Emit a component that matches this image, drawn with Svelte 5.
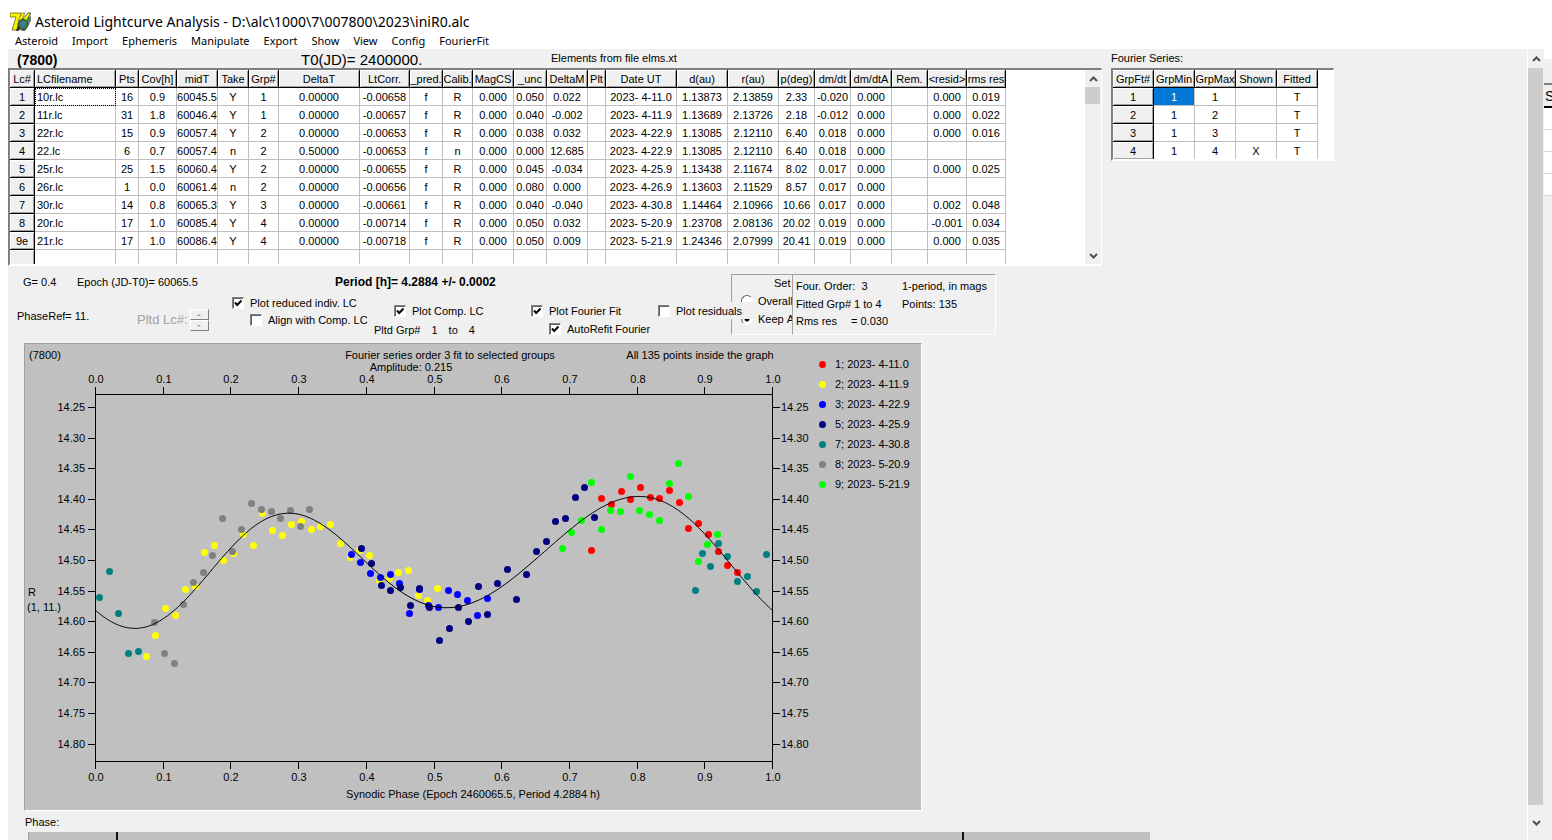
<script>
  const menus = ['Asteroid', 'Import', 'Ephemeris', 'Manipulate', 'Export', 'Show', 'View', 'Config', 'FourierFit'];

  const columns = [
    ['Lc#', 25], ['LCfilename', 81], ['Pts', 23], ['Cov[h]', 38], ['midT', 41], ['Take', 31], ['Grp#', 30],
    ['DeltaT', 81], ['LtCorr.', 50], ['_pred.', 33], ['Calib.', 30], ['MagCS', 41], ['_unc', 33], ['DeltaM', 41],
    ['Plt', 18], ['Date UT', 71], ['d(au)', 51], ['r(au)', 51], ['p(deg)', 36], ['dm/dt', 36], ['dm/dtA', 41],
    ['Rem.', 36], ['<resid>', 39], ['rms res', 39]
  ];

  const rows = [
    '1|10r.lc|16|0.9|60045.5|Y|1|0.00000|-0.00658|f|R|0.000|0.050|0.022||2023- 4-11.0|1.13873|2.13859|2.33|-0.020|0.000||0.000|0.019',
    '2|11r.lc|31|1.8|60046.4|Y|1|0.00000|-0.00657|f|R|0.000|0.040|-0.002||2023- 4-11.9|1.13689|2.13726|2.18|-0.012|0.000||0.000|0.022',
    '3|22r.lc|15|0.9|60057.4|Y|2|0.00000|-0.00653|f|R|0.000|0.038|0.032||2023- 4-22.9|1.13085|2.12110|6.40|0.018|0.000||0.000|0.016',
    '4|22.lc|6|0.7|60057.4|n|2|0.50000|-0.00653|f|n|0.000|0.000|12.685||2023- 4-22.9|1.13085|2.12110|6.40|0.018|0.000|||',
    '5|25r.lc|25|1.5|60060.4|Y|2|0.00000|-0.00655|f|R|0.000|0.045|-0.034||2023- 4-25.9|1.13438|2.11674|8.02|0.017|0.000||0.000|0.025',
    '6|26r.lc|1|0.0|60061.4|n|2|0.00000|-0.00656|f|R|0.000|0.080|0.000||2023- 4-26.9|1.13603|2.11529|8.57|0.017|0.000|||',
    '7|30r.lc|14|0.8|60065.3|Y|3|0.00000|-0.00661|f|R|0.000|0.040|-0.040||2023- 4-30.8|1.14464|2.10966|10.66|0.017|0.000||0.002|0.048',
    '8|20r.lc|17|1.0|60085.4|Y|4|0.00000|-0.00714|f|R|0.000|0.050|0.032||2023- 5-20.9|1.23708|2.08136|20.02|0.019|0.000||-0.001|0.034',
    '9e|21r.lc|17|1.0|60086.4|Y|4|0.00000|-0.00718|f|R|0.000|0.050|0.009||2023- 5-21.9|1.24346|2.07999|20.41|0.019|0.000||0.000|0.035',
    '|||||||||||||||||||||||'
  ].map((r) => r.split('|'));

  const fourierCols = ['GrpFt#', 'GrpMin', 'GrpMax', 'Shown', 'Fitted'];
  const fourierRows = [
    ['1', '1', '1', '', 'T'],
    ['2', '1', '2', '', 'T'],
    ['3', '1', '3', '', 'T'],
    ['4', '1', '4', 'X', 'T']
  ];

  // Observed points of each lightcurve, in chart units.
  const series = [
    { label: '1; 2023- 4-11.0', color: '#ff0000', pts: [[591,550],[601,498],[611,504],[621,491],[630,499],[640,487],[650,497],[659,498],[669,490],[679,502],[688,528],[698,523],[708,534],[718,551],[727,565],[737,572]] },
    { label: '2; 2023- 4-11.9', color: '#ffff00', pts: [[146,656],[155,635],[165,608],[175,615],[185,589],[195,586],[204,552],[214,545],[223,560],[233,553],[243,534],[253,545],[262,513],[272,530],[282,535],[291,524],[301,521],[311,529],[320,526],[330,524],[340,543],[350,557],[359,550],[369,555],[379,580],[389,578],[398,572],[408,570],[418,595],[427,600],[437,588]] },
    { label: '3; 2023- 4-22.9', color: '#0000ff', pts: [[351,554],[360,562],[370,573],[380,577],[390,574],[399,583],[409,613],[419,589],[428,605],[438,607],[448,590],[457,594],[467,600],[477,615],[487,598]] },
    { label: '5; 2023- 4-25.9', color: '#000080', pts: [[361,548],[371,563],[381,585],[390,590],[400,587],[410,605],[419,588],[429,607],[439,640],[449,628],[458,607],[468,621],[478,586],[487,614],[497,583],[507,569],[516,599],[526,574],[536,551],[546,541],[555,521],[565,518],[575,497],[584,487],[594,517]] },
    { label: '7; 2023- 4-30.8', color: '#008080', pts: [[99,597],[109,571],[118,613],[128,653],[138,651],[695,590],[702,553],[710,566],[718,543],[727,556],[737,581],[747,576],[756,591],[766,554]] },
    { label: '8; 2023- 5-20.9', color: '#808080', pts: [[154,622],[164,653],[174,663],[183,604],[193,582],[203,572],[212,555],[222,518],[232,551],[241,529],[251,503],[261,509],[271,511],[280,518],[290,510],[300,526],[309,509]] },
    { label: '9; 2023- 5-21.9', color: '#00ff00', pts: [[562,548],[571,532],[581,520],[591,482],[601,529],[610,510],[620,511],[630,476],[639,510],[649,514],[659,520],[669,483],[678,463],[688,496],[698,561],[707,544],[717,534]] }
  ];

  // Third-order Fourier curve through these nodes over one period.
  const nodes = [[95,610],[107,620],[118,625],[134,627.5],[152,624.5],[167,616.5],[183,603],[200,582],[223,555],[246,531],[262,519.5],[276,514],[290,513],[306,516],[323,525],[340,538],[357,553],[380,576],[397,589],[413,598.5],[430,605],[447,607.5],[464,605],[481,598.5],[498,589],[517,576],[538,556],[560,536],[580,520],[600,507],[620,499],[640,495.5],[660,500],[680,511],[700,528],[718,549],[737,572],[756,594],[772,610]];
  const X0 = 95.5;
  const WIDTH = 677;
  const STEPS = 338;
  const samples = Array.from({ length: STEPS }, (_, k) => {
    const x = 95 + (k / STEPS) * WIDTH;
    const i = nodes.findIndex((n) => n[0] > x);
    const [a, b] = [nodes[i - 1], nodes[i]];
    return a[1] + ((b[1] - a[1]) * (x - a[0])) / (b[0] - a[0]);
  });
  const mean = samples.reduce((s, v) => s + v, 0) / STEPS;
  const harmonics = [1, 2, 3].map((h) => {
    const w = (2 * Math.PI * h) / STEPS;
    return {
      w,
      c: (samples.reduce((s, v, k) => s + v * Math.cos(w * k), 0) * 2) / STEPS,
      s: (samples.reduce((s, v, k) => s + v * Math.sin(w * k), 0) * 2) / STEPS
    };
  });
  const curve = 'M' + Array.from({ length: STEPS + 1 }, (_, k) => {
    const y = harmonics.reduce((t, h) => t + h.c * Math.cos(h.w * k) + h.s * Math.sin(h.w * k), mean);
    return `${(X0 + (k / STEPS) * WIDTH).toFixed(1)} ${(y + 0.5).toFixed(1)}`;
  }).join('L');

  const xTicks = Array.from({ length: 11 }, (_, i) => ({ x: Math.round(95 + i * 67.7), t: (i / 10).toFixed(1) }));
  const yTicks = Array.from({ length: 12 }, (_, i) => ({ y: Math.round(407 + i * 30.6), t: (14.25 + i * 0.05).toFixed(2) }));
</script>

{#snippet chevron(up)}
  <svg class="chev" viewBox="0 0 9 6" aria-hidden="true">
    <path d={up ? 'M1 5 4.5 1.5 8 5' : 'M1 1 4.5 4.5 8 1'} fill="none" stroke="#505050" stroke-width="2" />
  </svg>
{/snippet}

{#snippet check(label, on)}
  <label class="check"><input type="checkbox" checked={on} /><span>{label}</span></label>
{/snippet}

<div class="window">
  <header class="title">
    <svg class="logo" viewBox="0 0 21 20" aria-hidden="true">
      <path d="M11 19 21 3V9L15 19Z" fill="#777" />
      <path d="M0 1H11V4L7 18H2L6 5H0Z" fill="#f8f000" stroke="#6b6a00" stroke-width=".8" />
      <path d="M8 9 12 1H15L12 8Z" fill="#f8f000" stroke="#555" stroke-width=".6" />
      <path d="M12 8 18 1H21L15 11Z" fill="#f8f000" stroke="#333" stroke-width=".8" />
      <circle cx="13" cy="12.500" r="5" fill="#2f7f4a" stroke="#1f3d33" />
      <path d="M10 11l3-2 3 2-1 3-3 1z" fill="#4b78a8" />
      <path d="M6 19l2-6 3 4-3 2z" fill="#333" />
      <path d="M16 10 20 5" stroke="#2d8a3a" stroke-width="2" />
    </svg>
    <h1>Asteroid Lightcurve Analysis - D:\alc\1000\7\007800\2023\iniR0.alc</h1>
  </header>
  <nav>
    {#each menus as m}<button type="button">{m}</button>{/each}
  </nav>

  <div class="body">
    <main>
      <div class="top">
        <section class="curves">
          <div class="caption">
            <strong>(7800)</strong>
            <span class="t0">T0(JD)= 2400000.</span>
            <span class="elements">Elements from file elms.xt</span>
          </div>
          <div class="grid-box">
            <div class="cells">
              <table>
                <colgroup>{#each columns as c}<col style="width:{c[1]}px" />{/each}</colgroup>
                <thead><tr>{#each columns as c, i}<th class:left={i === 1}>{c[0]}</th>{/each}</tr></thead>
                <tbody>
                  {#each rows as r, ri}
                    <tr>
                      {#each r as v, i}
                        {#if i === 0}<th scope="row">{v}</th>
                        {:else}<td class:left={i === 1} class:focus={i === 1 && ri === 0}>{v}</td>{/if}
                      {/each}
                    </tr>
                  {/each}
                </tbody>
              </table>
            </div>
            <div class="scroll">
              <button type="button" aria-label="Scroll up">{@render chevron(true)}</button>
              <div class="thumb short"></div>
              <button type="button" class="end" aria-label="Scroll down">{@render chevron(false)}</button>
            </div>
          </div>
        </section>

        <section class="fourier">
          <div class="caption"><span>Fourier Series:</span></div>
          <div class="grid-box">
            <table>
              <colgroup>{#each fourierCols as _}<col style="width:41px" />{/each}</colgroup>
              <thead><tr>{#each fourierCols as c}<th>{c}</th>{/each}</tr></thead>
              <tbody>
                {#each fourierRows as r, ri}
                  <tr>
                    {#each r as v, i}
                      {#if i === 0}<th scope="row">{v}</th>
                      {:else}<td class:selected={ri === 0 && i === 1}>{v}</td>{/if}
                    {/each}
                  </tr>
                {/each}
              </tbody>
            </table>
          </div>
        </section>
      </div>

      <section class="controls">
        <div class="left-part">
          <div class="params">
            <span class="g">G= 0.4</span>
            <span class="epoch">Epoch (JD-T0)= 60065.5</span>
            <strong>Period [h]= 4.2884 +/- 0.0002</strong>
          </div>
          <div class="options">
            <span class="phase-ref">PhaseRef= 11.</span>
            <div class="pltd">
              <span>Pltd Lc#:</span>
              <div class="spin">
                <button type="button" disabled aria-label="Next lightcurve"><i class="up"></i></button>
                <button type="button" disabled aria-label="Previous lightcurve"><i class="down"></i></button>
              </div>
            </div>
            <div class="group reduced">
              {@render check('Plot reduced indiv. LC', true)}
              <div class="indent">{@render check('Align with Comp. LC', false)}</div>
            </div>
            <div class="group comp">
              <div class="indent">{@render check('Plot Comp. LC', true)}</div>
              <div class="grp"><span>Pltd Grp#</span><span>1</span><span>to</span><span>4</span></div>
            </div>
            <div class="group fit">
              {@render check('Plot Fourier Fit', true)}
              <div class="indent">{@render check('AutoRefit Fourier', true)}</div>
            </div>
            <div class="group residuals">{@render check('Plot residuals', false)}</div>
          </div>
        </div>
        <fieldset class="amp" aria-label="Set amplitude">
          <span class="set">Set</span>
          <label><input type="radio" name="amp" />Overall</label>
          <label><input type="radio" name="amp" checked />Keep&nbsp;A</label>
        </fieldset>
        <div class="info">
          <span>Four. Order:&nbsp; 3</span><span>1-period, in mags</span>
          <span>Fitted Grp# 1 to 4</span><span>Points: 135</span>
          <span class="rms"><span>Rms res</span><span>= 0.030</span></span>
        </div>
      </section>

      <figure>
        <svg class="chart" viewBox="25 344 896 466" role="img" aria-label="Lightcurve of asteroid 7800">
          <text x="29" y="359">(7800)</text>
          <text x="450" y="359" text-anchor="middle">Fourier series order 3 fit to selected groups</text>
          <text x="411" y="371" text-anchor="middle">Amplitude: 0.215</text>
          <text x="700" y="359" text-anchor="middle">All 135 points inside the graph</text>
          <text x="28" y="596">R</text>
          <text x="27" y="611">(1, 11.)</text>
          <text x="473" y="798" text-anchor="middle">Synodic Phase (Epoch 2460065.5, Period 4.2884 h)</text>
          <g class="axes">
            <rect x="95.5" y="394.5" width="677" height="367" />
            {#each xTicks as k}
              <path d="M{k.x + 0.5} 387V394M{k.x + 0.5} 761V769" />
            {/each}
            {#each yTicks as k}
              <path d="M88 {k.y + 0.5}H95M773 {k.y + 0.5}H780" />
            {/each}
          </g>
          {#each xTicks as k}
            <text x={k.x + 1} y="383" text-anchor="middle">{k.t}</text>
            <text x={k.x + 1} y="781" text-anchor="middle">{k.t}</text>
          {/each}
          {#each yTicks as k}
            <text x="85" y={k.y + 4} text-anchor="end">{k.t}</text>
            <text x="781" y={k.y + 4}>{k.t}</text>
          {/each}
          {#each series as s, i}
            <g fill={s.color}>
              {#each s.pts as p}<circle cx={p[0] + 0.5} cy={p[1] + 0.5} r="3.5" />{/each}
              <circle cx="822.5" cy={364.5 + i * 20} r="3.5" />
            </g>
            <text x="835" y={368 + i * 20}>{s.label}</text>
          {/each}
          <path d={curve} fill="none" stroke="#000" />
        </svg>
      </figure>

      <div class="phase">
        <span>Phase:</span>
        <div class="track"><i class="first"></i><i class="second"></i></div>
      </div>
    </main>

    <div class="scroll page">
      <button type="button" aria-label="Scroll page up">{@render chevron(true)}</button>
      <div class="thumb"></div>
      <button type="button" aria-label="Scroll page down">{@render chevron(false)}</button>
    </div>

    <aside>
      <div class="behind"><div class="behind-head">S</div><div></div><div></div><div></div><div></div></div>
    </aside>
  </div>
</div>

<style>
  :global(body) {
    margin: 0;
    overflow: hidden;
    background: #fff;
  }
  .window {
    display: flex;
    flex-direction: column;
    height: 100vh;
    font: 11px/14px 'Liberation Sans', Arial, sans-serif;
    color: #000;
  }
  button {
    padding: 0;
    border: 0;
    background: none;
    font: inherit;
    color: inherit;
  }
  .title {
    display: flex;
    align-items: center;
    gap: 4px;
    padding: 12px 0 0 10px;
    height: 20px;
  }
  .logo {
    width: 21px;
    height: 20px;
  }
  h1 {
    margin: 0;
    font: 400 14px/20px 'Noto Sans', 'Open Sans', sans-serif;
    white-space: nowrap;
  }
  nav {
    display: flex;
    gap: 14px;
    padding-left: 15px;
    height: 17px;
    flex: none;
  }
  nav button {
    font: 11px/17px 'Noto Sans', 'Open Sans', sans-serif;
  }
  .body {
    display: flex;
    flex: 1;
    min-height: 0;
    padding-left: 8px;
  }
  main {
    flex: 1;
    min-width: 0;
    background: #f0f0f0;
    overflow: hidden;
    white-space: nowrap;
  }
  .top {
    display: flex;
    align-items: flex-start;
    gap: 9px;
  }
  .caption {
    display: flex;
    height: 19px;
    line-height: 19px;
  }
  .curves .caption {
    padding-left: 9px;
  }
  .caption strong {
    width: 284px;
    font-size: 14px;
    line-height: 22px;
  }
  .t0 {
    width: 250px;
    font-size: 15px;
    line-height: 22px;
  }
  .grid-box {
    display: flex;
    border: 2px solid;
    border-color: #808080 #fff #fff #808080;
    border-right-width: 1px;
    background: #fff;
  }
  .cells {
    padding-right: 79px;
    height: 194px;
    overflow: hidden;
  }
  .fourier .grid-box {
    padding-right: 15px;
    height: 89px;
    overflow: hidden;
  }
  table {
    table-layout: fixed;
    width: 0;
    border-collapse: separate;
    border-spacing: 0;
  }
  th,
  td {
    box-sizing: border-box;
    height: 18px;
    padding: 0;
    border: solid #c0c0c0;
    border-width: 0 1px 1px 0;
    overflow: hidden;
    font-weight: 400;
    line-height: 16px;
    text-align: center;
    white-space: nowrap;
  }
  th {
    border-color: #000;
    background: #f0f0f0;
    box-shadow: inset 1px 1px #fff, inset -1px -1px #a0a0a0;
  }
  th.left,
  td.left {
    padding-left: 2px;
    text-align: left;
  }
  td.focus {
    outline: 1px dotted #000;
    outline-offset: -1px;
  }
  td.selected {
    background: #0078d7;
    color: #fff;
  }
  .scroll {
    display: flex;
    flex-direction: column;
    width: 16px;
    background: #f0f0f0;
  }
  .scroll button {
    display: flex;
    align-items: center;
    justify-content: center;
    height: 17px;
  }
  .scroll .end {
    margin-top: auto;
  }
  .chev {
    width: 9px;
    height: 6px;
  }
  .thumb {
    background: #cdcdcd;
  }
  .thumb.short {
    width: 15px;
    height: 17px;
  }
  .page {
    flex: none;
    border-left: 1px solid #fff;
  }
  .page button {
    height: 19px;
  }
  .page .thumb {
    flex: 1;
    width: 15px;
  }
  .page button:last-child {
    height: 35px;
  }

  .controls {
    display: flex;
    align-items: flex-start;
    padding: 8px 0 6px 9px;
  }
  .left-part {
    width: 714px;
  }
  .params {
    display: flex;
    height: 20px;
    line-height: 16px;
    padding-left: 6px;
  }
  .g {
    width: 54px;
  }
  .epoch {
    width: 258px;
  }
  .params strong {
    font-size: 12px;
  }
  .options {
    display: grid;
    grid-template-columns: 120px 95px 142px 157px 127px 100px;
    align-items: start;
  }
  .phase-ref {
    padding-top: 15px;
  }
  .pltd {
    display: flex;
    gap: 2px;
    padding-top: 15px;
    font-size: 13px;
    line-height: 22px;
    color: #a0a0a0;
  }
  .spin {
    display: flex;
    flex-direction: column;
  }
  .spin button {
    display: grid;
    place-items: center;
    width: 19px;
    height: 11px;
    box-sizing: border-box;
    border: 1px solid;
    border-color: #fff #808080 #808080 #fff;
  }
  .spin i {
    border: 2px solid transparent;
  }
  .spin .up {
    border-top: 0;
    border-bottom-color: #a0a0a0;
  }
  .spin .down {
    border-bottom: 0;
    border-top-color: #a0a0a0;
  }
  .group {
    display: flex;
    flex-direction: column;
    gap: 1px;
  }
  .group .indent {
    padding-left: 18px;
  }
  .reduced {
    gap: 0;
  }
  .comp,
  .fit,
  .residuals {
    padding-top: 8px;
  }
  .comp {
    gap: 4px;
  }
  .comp .indent {
    padding-left: 20px;
  }
  .grp {
    display: flex;
    gap: 11px;
  }
  .residuals {
    position: relative;
    z-index: 1;
  }
  .residuals :global(.check) {
    background: #f0f0f0;
  }
  .check {
    display: flex;
    align-items: center;
    gap: 6px;
    height: 17px;
  }
  .check input {
    appearance: none;
    box-sizing: border-box;
    flex: none;
    width: 12px;
    height: 12px;
    margin: 0;
    border: 1px solid;
    border-color: #808080 #fff #fff #808080;
    background: #fff;
    box-shadow: inset 1px 1px #606060;
  }
  .check input:checked {
    background: #fff url("data:image/svg+xml,%3Csvg xmlns='http://www.w3.org/2000/svg' viewBox='0 0 10 10'%3E%3Cpath d='M2 4.5 4.2 7 8.5 2.5' fill='none' stroke='%23000' stroke-width='2'/%3E%3C/svg%3E");
  }
  .amp {
    box-sizing: border-box;
    min-width: 0;
    width: 61px;
    height: 61px;
    margin: 0;
    padding: 0;
    border: solid;
    border-width: 1px 0 1px 1px;
    border-color: #a0a0a0 #fff #fff #a0a0a0;
    overflow: hidden;
  }
  .set {
    display: block;
    padding-left: 42px;
    line-height: 17px;
  }
  .amp label {
    display: flex;
    align-items: center;
    gap: 5px;
    height: 18px;
    padding-left: 9px;
  }
  .amp input {
    appearance: none;
    box-sizing: border-box;
    flex: none;
    width: 12px;
    height: 12px;
    margin: 0;
    border: 1px solid;
    border-color: #606060 #fff #fff #606060;
    border-radius: 50%;
    background: #fff;
  }
  .amp input:checked {
    background: radial-gradient(circle, #000 2px, #fff 3px);
  }
  .info {
    display: grid;
    grid-template-columns: 106px 93px;
    grid-auto-rows: 18px;
    box-sizing: border-box;
    height: 61px;
    padding: 1px 0 0 3px;
    border: 1px solid;
    border-color: #a0a0a0 #fff #fff #a0a0a0;
    line-height: 20px;
  }
  .rms {
    display: grid;
    grid-template-columns: 55px auto;
    line-height: 18px;
  }
  figure {
    width: 896px;
    margin: 0 0 0 16px;
    border: 1px solid;
    border-color: #a0a0a0 #fff #fff #a0a0a0;
    background: #c0c0c0;
  }
  .chart {
    display: block;
    width: 100%;
    font-size: 11px;
  }
  .axes {
    fill: none;
    stroke: #000;
  }
  .phase {
    padding-left: 17px;
  }
  .phase span {
    display: block;
    height: 21px;
    line-height: 22px;
  }
  .track {
    display: flex;
    width: 1121px;
    height: 20px;
    margin-left: 3px;
    border-left: 1px solid #a0a0a0;
    background: #c0c0c0;
  }
  .track i {
    box-sizing: border-box;
    border-right: 2px solid #111;
  }
  .first {
    width: 89px;
  }
  .second {
    width: 846px;
  }
  aside {
    flex: none;
    width: 8px;
    margin-top: 10px;
    background: #f0f0f0;
    overflow: hidden;
  }
  .behind {
    margin-top: 24px;
    border-top: 2px solid #808080;
  }
  .behind div {
    box-sizing: border-box;
    height: 22px;
    border-bottom: 1px solid #d8d8d8;
    background: #fff;
  }
  .behind .behind-head {
    height: 23px;
    padding-left: 1px;
    border-bottom: 2px solid #000;
    background: #f0f0f0;
    font-size: 14px;
    line-height: 22px;
  }
</style>
